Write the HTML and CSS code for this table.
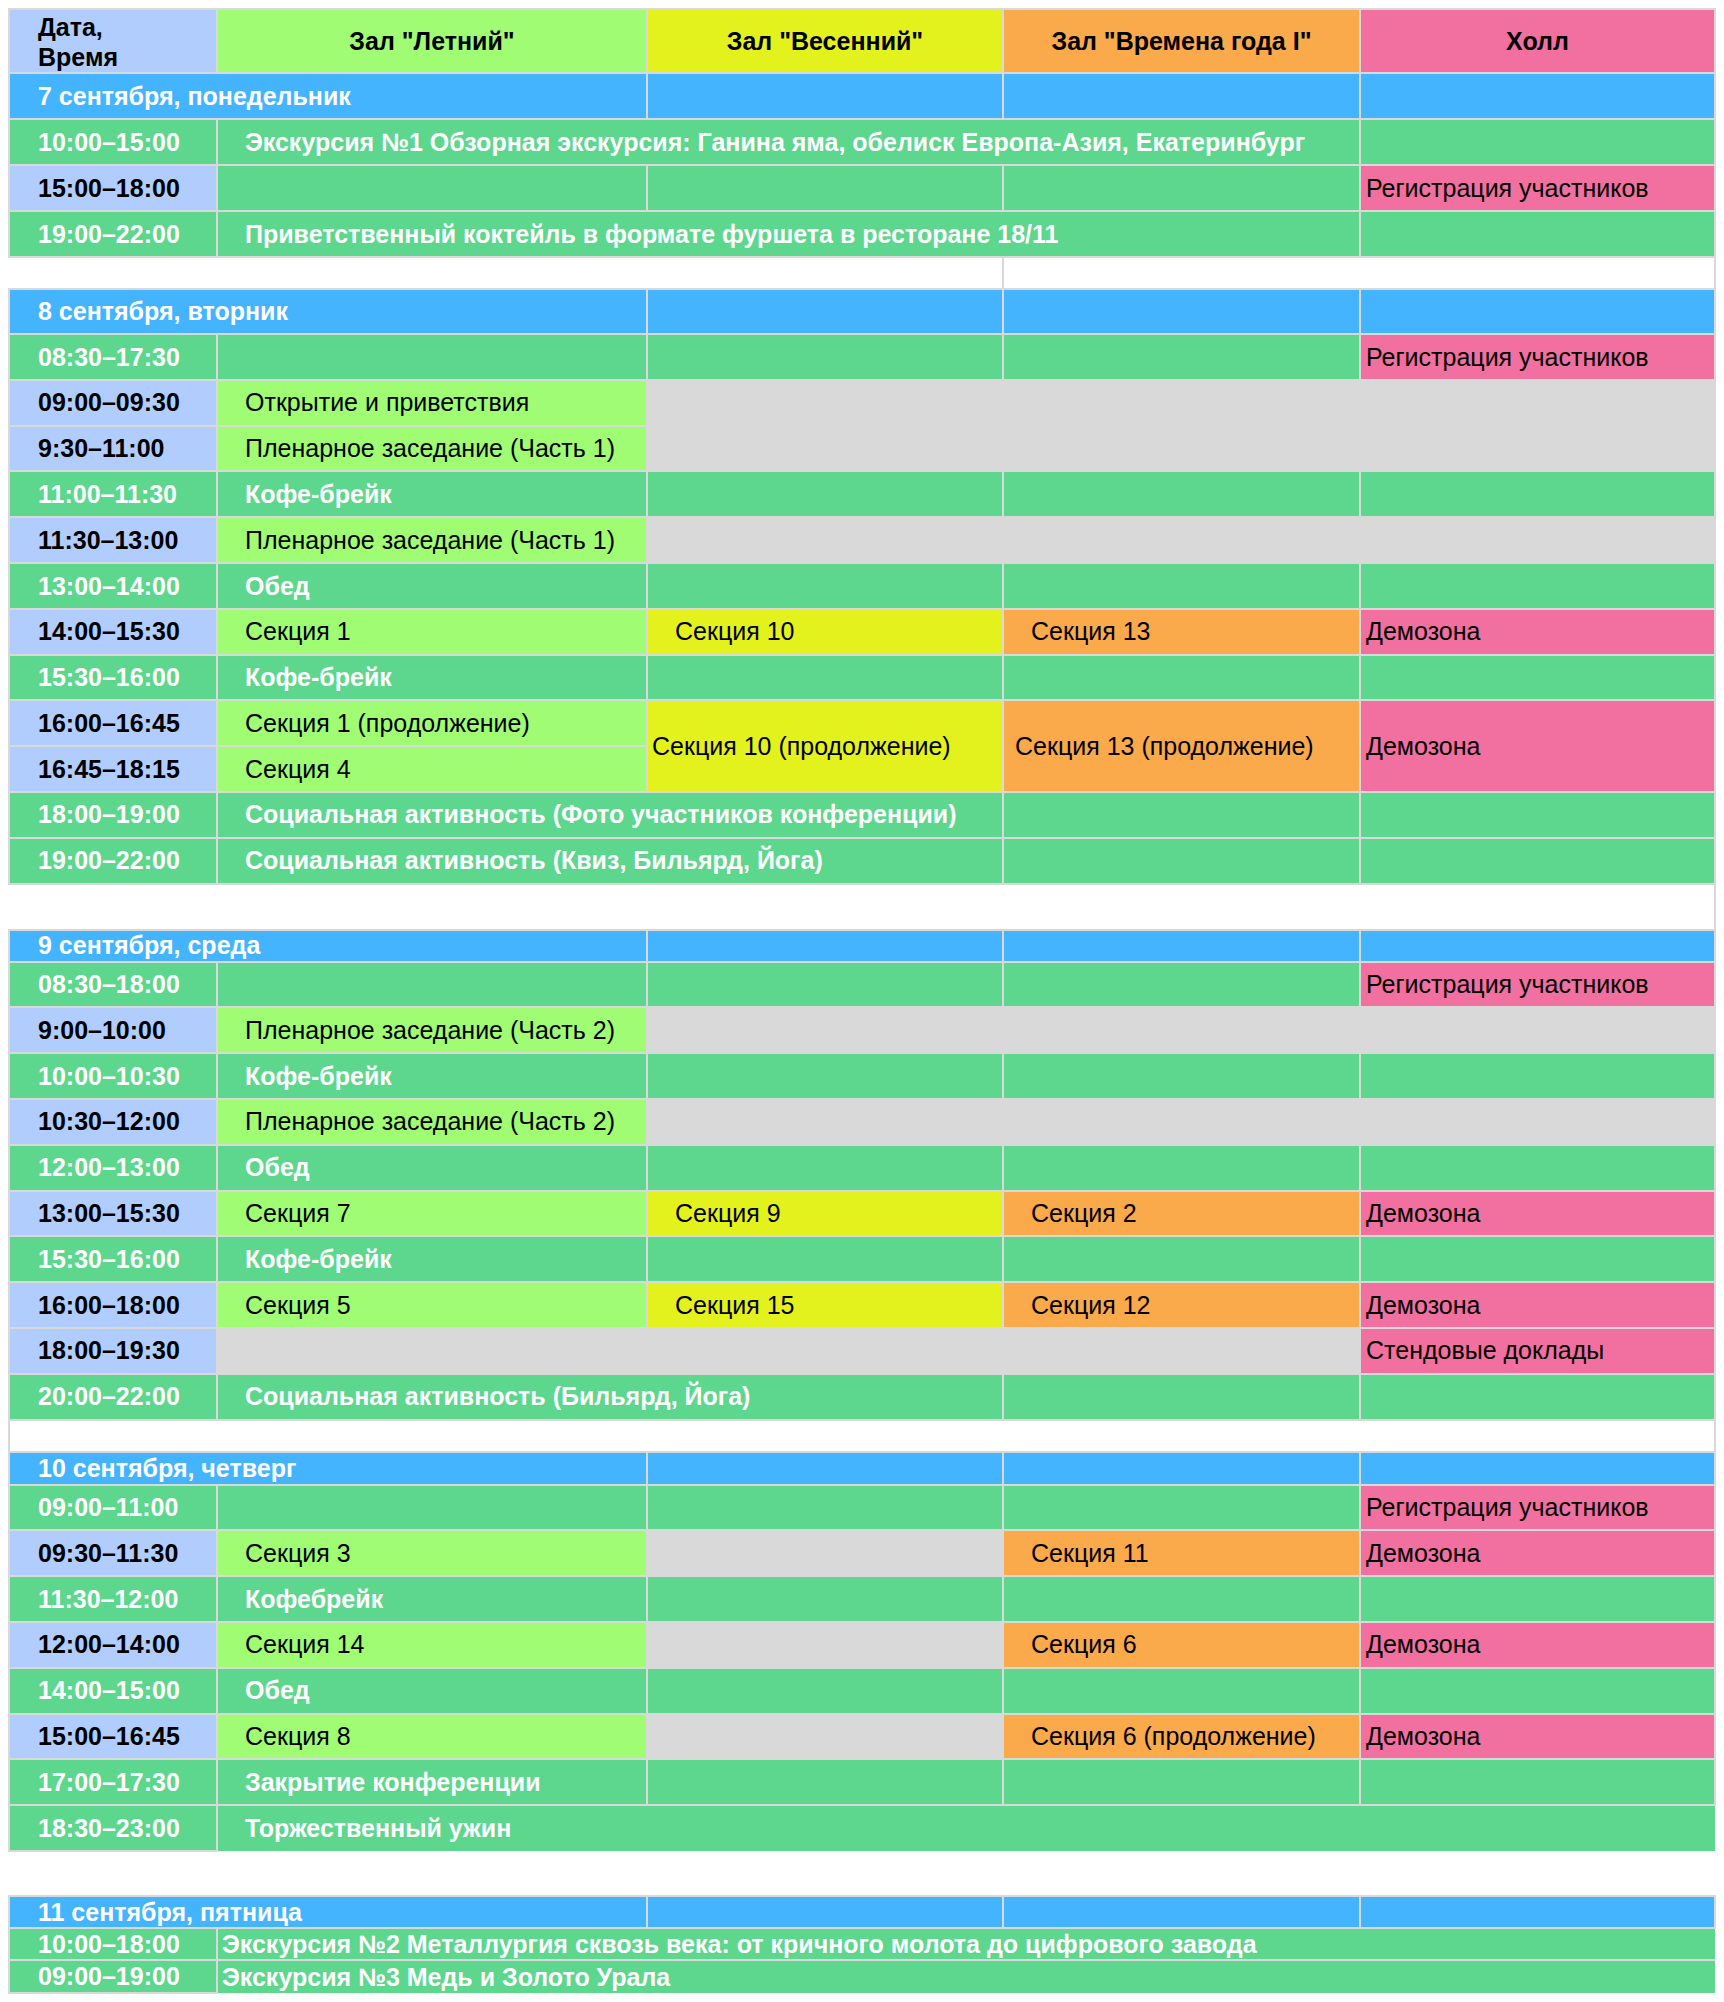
FILE: index.html
```html
<!DOCTYPE html>
<html lang="ru">
<head>
<meta charset="utf-8">
<title>Программа конференции</title>
<link rel="stylesheet" href="styles.css">
</head>
<body>
<table class="sched">
  <colgroup>
    <col class="w1"><col class="w2"><col class="w3"><col class="w4"><col class="w5">
  </colgroup>
  <tbody>
    <tr class="h-head">
      <td class="lb b t hd">Дата,<br>Время</td>
      <td class="lm c">Зал "Летний"</td>
      <td class="y c">Зал "Весенний"</td>
      <td class="o c">Зал "Времена года I"</td>
      <td class="p c">Холл</td>
    </tr>

    <!-- 7 сентября -->
    <tr class="h46">
      <td class="bl t" colspan="2">7 сентября, понедельник</td>
      <td class="bl"></td><td class="bl"></td><td class="bl"></td>
    </tr>
    <tr class="h46">
      <td class="g t">10:00–15:00</td>
      <td class="g" colspan="3">Экскурсия №1 Обзорная экскурсия: Ганина яма, обелиск Европа-Азия, Екатеринбург</td>
      <td class="g"></td>
    </tr>
    <tr class="h46">
      <td class="lb b t">15:00–18:00</td>
      <td class="g"></td><td class="g"></td><td class="g"></td>
      <td class="p ps">Регистрация участников</td>
    </tr>
    <tr class="h46">
      <td class="g t">19:00–22:00</td>
      <td class="g" colspan="3">Приветственный коктейль в формате фуршета в ресторане 18/11</td>
      <td class="g"></td>
    </tr>
    <tr class="gap-s">
      <td class="nb" colspan="3"></td>
      <td class="gap-box" colspan="2"></td>
    </tr>

    <!-- 8 сентября -->
    <tr class="h45">
      <td class="bl t" colspan="2">8 сентября, вторник</td>
      <td class="bl"></td><td class="bl"></td><td class="bl"></td>
    </tr>
    <tr class="hr">
      <td class="g t">08:30–17:30</td>
      <td class="g"></td><td class="g"></td><td class="g"></td>
      <td class="p ps">Регистрация участников</td>
    </tr>
    <tr class="hr">
      <td class="lb b t">09:00–09:30</td>
      <td class="lm">Открытие и приветствия</td>
      <td class="gr" colspan="3" rowspan="2"></td>
    </tr>
    <tr class="hr">
      <td class="lb b t">9:30–11:00</td>
      <td class="lm">Пленарное заседание (Часть 1)</td>
    </tr>
    <tr class="hr">
      <td class="g t">11:00–11:30</td>
      <td class="g">Кофе-брейк</td>
      <td class="g"></td><td class="g"></td><td class="g"></td>
    </tr>
    <tr class="hr">
      <td class="lb b t">11:30–13:00</td>
      <td class="lm">Пленарное заседание (Часть 1)</td>
      <td class="gr" colspan="3"></td>
    </tr>
    <tr class="hr">
      <td class="g t">13:00–14:00</td>
      <td class="g">Обед</td>
      <td class="g"></td><td class="g"></td><td class="g"></td>
    </tr>
    <tr class="hr">
      <td class="lb b t">14:00–15:30</td>
      <td class="lm">Секция 1</td>
      <td class="y">Секция 10</td>
      <td class="o">Секция 13</td>
      <td class="p ps">Демозона</td>
    </tr>
    <tr class="hr">
      <td class="g t">15:30–16:00</td>
      <td class="g">Кофе-брейк</td>
      <td class="g"></td><td class="g"></td><td class="g"></td>
    </tr>
    <tr class="hr">
      <td class="lb b t">16:00–16:45</td>
      <td class="lm">Секция 1 (продолжение)</td>
      <td class="y pxs" rowspan="2">Секция 10 (продолжение)</td>
      <td class="o pm" rowspan="2">Секция 13 (продолжение)</td>
      <td class="p ps" rowspan="2">Демозона</td>
    </tr>
    <tr class="hr">
      <td class="lb b t">16:45–18:15</td>
      <td class="lm">Секция 4</td>
    </tr>
    <tr class="hr">
      <td class="g t">18:00–19:00</td>
      <td class="g" colspan="2">Социальная активность (Фото участников конференции)</td>
      <td class="g"></td><td class="g"></td>
    </tr>
    <tr class="hr">
      <td class="g t">19:00–22:00</td>
      <td class="g" colspan="2">Социальная активность (Квиз, Бильярд, Йога)</td>
      <td class="g"></td><td class="g"></td>
    </tr>
    <tr class="gap-l">
      <td class="gap-r" colspan="5"></td>
    </tr>

    <!-- 9 сентября -->
    <tr class="h32">
      <td class="bl t" colspan="2">9 сентября, среда</td>
      <td class="bl"></td><td class="bl"></td><td class="bl"></td>
    </tr>
    <tr class="hr">
      <td class="g t">08:30–18:00</td>
      <td class="g"></td><td class="g"></td><td class="g"></td>
      <td class="p ps">Регистрация участников</td>
    </tr>
    <tr class="hr">
      <td class="lb b t">9:00–10:00</td>
      <td class="lm">Пленарное заседание (Часть 2)</td>
      <td class="gr" colspan="3"></td>
    </tr>
    <tr class="hr">
      <td class="g t">10:00–10:30</td>
      <td class="g">Кофе-брейк</td>
      <td class="g"></td><td class="g"></td><td class="g"></td>
    </tr>
    <tr class="hr">
      <td class="lb b t">10:30–12:00</td>
      <td class="lm">Пленарное заседание (Часть 2)</td>
      <td class="gr" colspan="3"></td>
    </tr>
    <tr class="hr">
      <td class="g t">12:00–13:00</td>
      <td class="g">Обед</td>
      <td class="g"></td><td class="g"></td><td class="g"></td>
    </tr>
    <tr class="hr">
      <td class="lb b t">13:00–15:30</td>
      <td class="lm">Секция 7</td>
      <td class="y">Секция 9</td>
      <td class="o">Секция 2</td>
      <td class="p ps">Демозона</td>
    </tr>
    <tr class="hr">
      <td class="g t">15:30–16:00</td>
      <td class="g">Кофе-брейк</td>
      <td class="g"></td><td class="g"></td><td class="g"></td>
    </tr>
    <tr class="hr">
      <td class="lb b t">16:00–18:00</td>
      <td class="lm">Секция 5</td>
      <td class="y">Секция 15</td>
      <td class="o">Секция 12</td>
      <td class="p ps">Демозона</td>
    </tr>
    <tr class="hr">
      <td class="lb b t">18:00–19:30</td>
      <td class="gr" colspan="3"></td>
      <td class="p ps">Стендовые доклады</td>
    </tr>
    <tr class="hr">
      <td class="g t">20:00–22:00</td>
      <td class="g" colspan="2">Социальная активность (Бильярд, Йога)</td>
      <td class="g"></td><td class="g"></td>
    </tr>
    <tr class="gap-s">
      <td class="gap-lr" colspan="5"></td>
    </tr>

    <!-- 10 сентября -->
    <tr class="h33">
      <td class="bl t" colspan="2">10 сентября, четверг</td>
      <td class="bl"></td><td class="bl"></td><td class="bl"></td>
    </tr>
    <tr class="hr">
      <td class="g t">09:00–11:00</td>
      <td class="g"></td><td class="g"></td><td class="g"></td>
      <td class="p ps">Регистрация участников</td>
    </tr>
    <tr class="hr">
      <td class="lb b t">09:30–11:30</td>
      <td class="lm">Секция 3</td>
      <td class="gr"></td>
      <td class="o">Секция 11</td>
      <td class="p ps">Демозона</td>
    </tr>
    <tr class="hr">
      <td class="g t">11:30–12:00</td>
      <td class="g">Кофебрейк</td>
      <td class="g"></td><td class="g"></td><td class="g"></td>
    </tr>
    <tr class="hr">
      <td class="lb b t">12:00–14:00</td>
      <td class="lm">Секция 14</td>
      <td class="gr"></td>
      <td class="o">Секция 6</td>
      <td class="p ps">Демозона</td>
    </tr>
    <tr class="hr">
      <td class="g t">14:00–15:00</td>
      <td class="g">Обед</td>
      <td class="g"></td><td class="g"></td><td class="g"></td>
    </tr>
    <tr class="hr">
      <td class="lb b t">15:00–16:45</td>
      <td class="lm">Секция 8</td>
      <td class="gr"></td>
      <td class="o">Секция 6 (продолжение)</td>
      <td class="p ps">Демозона</td>
    </tr>
    <tr class="hr">
      <td class="g t">17:00–17:30</td>
      <td class="g">Закрытие конференции</td>
      <td class="g"></td><td class="g"></td><td class="g"></td>
    </tr>
    <tr class="hr">
      <td class="g t">18:30–23:00</td>
      <td class="g open" colspan="4">Торжественный ужин</td>
    </tr>
    <tr class="gap-m">
      <td class="nb" colspan="5"></td>
    </tr>

    <!-- 11 сентября -->
    <tr class="h32">
      <td class="bl t" colspan="2">11 сентября, пятница</td>
      <td class="bl"></td><td class="bl"></td><td class="bl"></td>
    </tr>
    <tr class="h32">
      <td class="g t">10:00–18:00</td>
      <td class="g pxs open-r" colspan="4">Экскурсия №2 Металлургия сквозь века: от кричного молота до цифрового завода</td>
    </tr>
    <tr class="h33">
      <td class="g t">09:00–19:00</td>
      <td class="g pxs open" colspan="4">Экскурсия №3 Медь и Золото Урала</td>
    </tr>
  </tbody>
</table>
</body>
</html>
```

FILE: styles.css
```css
html, body {
  background: #ffffff;
}

body {
  margin: 8px;
  font-family: "Liberation Sans", Arial, sans-serif;
  font-size: 25px;
  color: #000000;
}

.sched {
  border-collapse: collapse;
  table-layout: fixed;
  width: 1706px;
}

.w1 { width: 208px; }
.w2 { width: 430px; }
.w3 { width: 356px; }
.w4 { width: 357px; }
.w5 { width: 355px; }

.sched td {
  border: 2px solid #d9d9d9;
  padding: 0 4px 0 27px;
  vertical-align: middle;
  white-space: nowrap;
  overflow: hidden;
  line-height: 1.15;
}

/* row heights */
.h-head { height: 64px; }
.h46 { height: 46px; }
.h45 { height: 45px; }
.hr { height: 45.8px; }
.h32 { height: 32px; }
.h33 { height: 33px; }
.gap-s { height: 32px; }
.gap-l { height: 46px; }
.gap-m { height: 45px; }

/* cell colours */
.lb { background: #b0cdfd; }
.lm { background: #9ffc73; }
.y  { background: #e3f21d; }
.o  { background: #faa94b; }
.p  { background: #f2709f; }
.gr { background: #d9d9d9; }
.g  { background: #5dd68e; color: #ffffff; font-weight: bold; }
.bl { background: #44b4ff; color: #ffffff; font-weight: bold; }

.b { font-weight: bold; }

.sched .t { padding-left: 28px; }
.sched .hd { line-height: 30px; padding-top: 2px; }
.sched .c { text-align: center; font-weight: bold; padding-left: 4px; }

.sched .ps  { padding-left: 5px; }
.sched .pxs { padding-left: 4px; }
.sched .pm  { padding-left: 11px; }

/* gap rows */
.sched .nb { border: none; }
.sched .gap-r { border-left: none; }
.sched .gap-lr { border-left: 2px solid #d9d9d9; border-right: 2px solid #d9d9d9; }

.sched .open { border-right: none; border-bottom: none; }
.sched .open-r { border-right: none; }
```
